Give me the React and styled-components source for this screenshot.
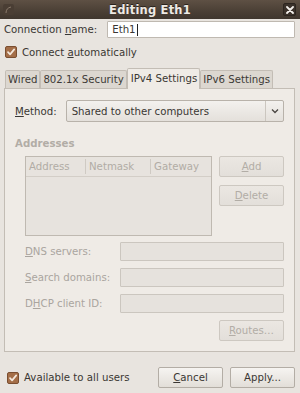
import React from "react";
import styled, { createGlobalStyle, css } from "styled-components";

const Global = createGlobalStyle`
  html, body { margin: 0; padding: 0; }
  body {
    width: 300px; height: 393px; overflow: hidden;
    background: #e8e4df;
    font-family: "DejaVu Sans", "Liberation Sans", sans-serif;
    font-size: 10.2px;
    color: #3a3733;
  }
`;

const Window = styled.div`
  width: 300px;
  height: 393px;
  display: flex;
  flex-direction: column;
  background: #e8e4df;
`;

const TitleBar = styled.div`
  height: 19px;
  display: grid;
  grid-template-columns: 20px 1fr 20px;
  align-items: center;
  background: linear-gradient(#5e5044, #4a3f35 60%, #3f362e);
  color: #eeeae5;
`;

const Title = styled.div`
  text-align: center;
  font-weight: bold;
  font-size: 11.5px;
  letter-spacing: 0.2px;
  text-shadow: 0 -1px 0 #2a231d;
`;

const MenuIcon = styled.div`
  width: 11px;
  height: 11px;
  margin-left: 3px;
  border-radius: 2px;
  background: #4a3e34;
  display: flex;
  align-items: center;
  justify-content: center;
`;

const CloseBtn = styled.div`
  width: 13px;
  height: 13px;
  margin-left: 3px;
  border-radius: 2px;
  background: #3b322b;
  border: 1px solid #2c251f;
  box-sizing: border-box;
  display: flex;
  align-items: center;
  justify-content: center;
`;

const Body = styled.div`
  flex: 1;
  display: flex;
  flex-direction: column;
  padding: 2px 5px 0 4px;
`;

const NameRow = styled.div`
  display: flex;
  align-items: center;
  height: 17px;
  gap: 10px;
`;

const Label = styled.span`
  white-space: nowrap;
  color: ${(p) => (p.$disabled ? "#aaa59f" : "#3a3733")};
`;

const U = styled.span`
  text-decoration: underline;
  text-underline-offset: 1px;
`;

const TextInput = styled.div`
  flex: 1;
  height: 17px;
  box-sizing: border-box;
  background: #ffffff;
  border: 1px solid #bfb9b1;
  border-radius: 1px;
  display: flex;
  align-items: center;
  padding-left: 4px;
`;

const Caret = styled.span`
  display: inline-block;
  width: 1px;
  height: 12px;
  background: #222;
  margin-left: 1px;
`;

const CheckRow = styled.div`
  display: flex;
  align-items: center;
  gap: 5px;
  height: 18px;
  margin-top: ${(p) => p.$mt || 0}px;
  padding-left: ${(p) => p.$pl || 0}px;
`;

const Tabs = styled.div`
  margin-top: 6px;
  display: flex;
  align-items: flex-end;
  height: 21px;
  padding-left: 1px;
`;

const Tab = styled.div`
  box-sizing: border-box;
  padding: 0 2px;
  display: flex;
  align-items: center;
  border: 1px solid #c3bdb5;
  border-bottom: none;
  border-radius: 2px 2px 0 0;
  margin-right: 0;
  ${(p) =>
    p.$active
      ? css`
          height: 21px;
          background: #efebe6;
          position: relative;
          top: 1px;
          padding-bottom: 2px;
          padding-left: 3px;
        `
      : css`
          height: 18px;
          background: #dcd7d0;
          color: #3d3a36;
        `}
`;

const Panel = styled.div`
  box-sizing: border-box;
  height: 264px;
  border: 1px solid #c3bdb5;
  background: #efebe6;
  padding: 11px 10px 0 10px;
  display: flex;
  flex-direction: column;
`;

const MethodRow = styled.div`
  display: flex;
  align-items: center;
  gap: 9px;
  height: 22px;
`;

const Combo = styled.div`
  flex: 1;
  height: 22px;
  box-sizing: border-box;
  border: 1px solid #b8b2aa;
  border-radius: 2px;
  background: linear-gradient(#f3f1ee, #e4e0db);
  display: flex;
  align-items: center;
`;

const ComboText = styled.div`
  flex: 1;
  padding-left: 5px;
`;

const ComboArrow = styled.div`
  width: 17px;
  height: 100%;
  border-left: 1px solid #cbc6bf;
  display: flex;
  align-items: center;
  justify-content: center;
`;

const Heading = styled.div`
  margin-top: 16px;
  font-weight: bold;
  color: #b2ada6;
  height: 12px;
  line-height: 12px;
`;

const AddrArea = styled.div`
  margin-top: 6px;
  padding-left: 10px;
  display: flex;
  gap: 7px;
`;

const Table = styled.div`
  width: 188px;
  height: 80px;
  box-sizing: border-box;
  border: 1px solid #bfb9b1;
  background: #e7e3de;
`;

const TableHead = styled.div`
  display: grid;
  grid-template-columns: 59px 65px 1fr;
  height: 19px;
  border-bottom: 1px solid #d3cec7;
`;

const HeadCell = styled.div`
  display: flex;
  align-items: center;
  padding-left: 3px;
  color: #b1aca5;
  border-left: ${(p) => (p.$first ? "none" : "1px solid #cfcac3")};
  margin: 2px 0;
`;

const SideButtons = styled.div`
  display: flex;
  flex-direction: column;
  gap: 8px;
`;

const Button = styled.div`
  box-sizing: border-box;
  width: ${(p) => p.$w || 65}px;
  height: ${(p) => p.$h || 21}px;
  border: 1px solid ${(p) => (p.$disabled ? "#cdc8c1" : "#b3ada5")};
  border-radius: 2px;
  background: ${(p) =>
    p.$disabled
      ? "linear-gradient(#ebe7e2, #e3dfda)"
      : "linear-gradient(#f6f4f1, #e2ded8)"};
  color: ${(p) => (p.$disabled ? "#b2ada6" : "#3a3733")};
  display: flex;
  align-items: center;
  justify-content: center;
`;

const FieldList = styled.div`
  margin-top: 6px;
  padding-left: 10px;
  display: flex;
  flex-direction: column;
  gap: 7px;
`;

const FieldRow = styled.div`
  display: grid;
  grid-template-columns: 95px 1fr;
  align-items: center;
  height: 19px;
`;

const DisabledInput = styled.div`
  height: 19px;
  box-sizing: border-box;
  border: 1px solid #cbc6bf;
  border-radius: 1px;
  background: #e6e2dd;
`;

const RoutesRow = styled.div`
  margin-top: 7px;
  display: flex;
  justify-content: flex-end;
`;

const Footer = styled.div`
  margin-top: 15px;
  display: flex;
  align-items: center;
  height: 21px;
  padding-left: 3px;
  gap: 5px;
`;

const Spacer = styled.div`
  flex: 1;
`;

const FooterButtons = styled.div`
  display: flex;
  gap: 7px;
`;

const CheckBox = () => (
  <svg width="12" height="12" viewBox="0 0 12 12">
    <rect x="0.5" y="0.5" width="11" height="11" rx="1.5" fill="#a46e48" stroke="#7a4e30" />
    <path d="M3 6.2 L5.1 8.4 L9.2 3.4" fill="none" stroke="#f4e8dc" strokeWidth="1.7" strokeLinecap="round" strokeLinejoin="round" />
  </svg>
);

export default function App() {
  return (
    <>
      <Global />
      <Window>
        <TitleBar>
          <MenuIcon>
            <svg width="9" height="9" viewBox="0 0 9 9">
              <path d="M2 8 Q2 3 7 2" fill="none" stroke="#8a7a6c" strokeWidth="1" />
            </svg>
          </MenuIcon>
          <Title>Editing Eth1</Title>
          <CloseBtn>
            <svg width="8" height="8" viewBox="0 0 8 8">
              <path d="M1 1 L7 7 M7 1 L1 7" stroke="#f2efeb" strokeWidth="1.8" strokeLinecap="round" />
            </svg>
          </CloseBtn>
        </TitleBar>
        <Body>
          <NameRow>
            <Label>
              Connection <U>n</U>ame:
            </Label>
            <TextInput>
              Eth1
              <Caret />
            </TextInput>
          </NameRow>
          <CheckRow $mt={5} $pl={1}>
            <CheckBox />
            <Label>
              Connect <U>a</U>utomatically
            </Label>
          </CheckRow>
          <Tabs>
            <Tab>Wired</Tab>
            <Tab>802.1x Security</Tab>
            <Tab $active>IPv4 Settings</Tab>
            <Tab>IPv6 Settings</Tab>
          </Tabs>
          <Panel>
            <MethodRow>
              <Label>
                <U>M</U>ethod:
              </Label>
              <Combo>
                <ComboText>Shared to other computers</ComboText>
                <ComboArrow>
                  <svg width="8" height="6" viewBox="0 0 8 6">
                    <path d="M1 1.5 L4 4.5 L7 1.5" fill="none" stroke="#4a4642" strokeWidth="1.3" />
                  </svg>
                </ComboArrow>
              </Combo>
            </MethodRow>
            <Heading>Addresses</Heading>
            <AddrArea>
              <Table>
                <TableHead>
                  <HeadCell $first>Address</HeadCell>
                  <HeadCell>Netmask</HeadCell>
                  <HeadCell>Gateway</HeadCell>
                </TableHead>
              </Table>
              <SideButtons>
                <Button $disabled>
                  <span>
                    <U>A</U>dd
                  </span>
                </Button>
                <Button $disabled>
                  <span>
                    <U>D</U>elete
                  </span>
                </Button>
              </SideButtons>
            </AddrArea>
            <FieldList>
              <FieldRow>
                <Label $disabled>
                  <U>D</U>NS servers:
                </Label>
                <DisabledInput />
              </FieldRow>
              <FieldRow>
                <Label $disabled>
                  <U>S</U>earch domains:
                </Label>
                <DisabledInput />
              </FieldRow>
              <FieldRow>
                <Label $disabled>
                  D<U>H</U>CP client ID:
                </Label>
                <DisabledInput />
              </FieldRow>
            </FieldList>
            <RoutesRow>
              <Button $disabled>
                <span>
                  <U>R</U>outes…
                </span>
              </Button>
            </RoutesRow>
          </Panel>
          <Footer>
            <CheckBox />
            <Label>Available to all users</Label>
            <Spacer />
            <FooterButtons>
              <Button>
                <span>
                  <U>C</U>ancel
                </span>
              </Button>
              <Button>Apply...</Button>
            </FooterButtons>
          </Footer>
        </Body>
      </Window>
    </>
  );
}
